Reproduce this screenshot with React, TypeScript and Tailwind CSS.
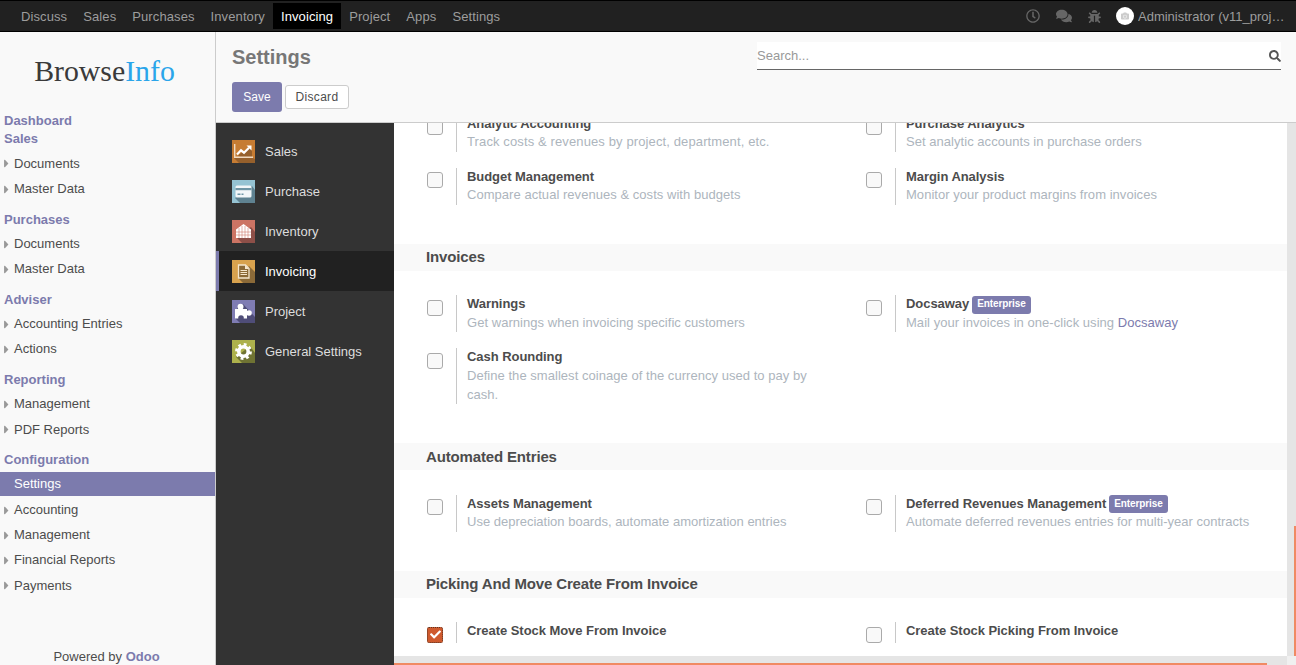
import React from 'react';
import { FaBug, FaComments, FaRegClock, FaSearch, FaCamera, FaCheck, FaCaretRight } from 'react-icons/fa';

const navItems = ['Discuss', 'Sales', 'Purchases', 'Inventory', 'Invoicing', 'Project', 'Apps', 'Settings'];

const menu = [
    { title: 'Dashboard', items: [] },
    { title: 'Sales', items: ['Documents', 'Master Data'] },
    { title: 'Purchases', items: ['Documents', 'Master Data'] },
    { title: 'Adviser', items: ['Accounting Entries', 'Actions'] },
    { title: 'Reporting', items: ['Management', 'PDF Reports'] },
    { title: 'Configuration', items: ['Settings', 'Accounting', 'Management', 'Financial Reports', 'Payments'] },
];

const AppIcon = ({ bg, shadow, d, children }: { bg: string; shadow: string; d: string; children: React.ReactNode }) => (
    <svg width="23" height="23" viewBox="0 0 23 23" className="shrink-0">
        <rect width="23" height="23" fill={bg} />
        <path d={d} fill={shadow} />
        {children}
    </svg>
);

const tabs = [
    {
        label: 'Sales',
        icon: (
            <AppIcon bg="#c67c33" shadow="#96602c" d="M2 18 L7 23 L23 23 L23 19 L21 18 Z M6 15 L9 18 L20 18 L20 11 L18 8 Z">
                <path d="M2.7 4V17.3H21" fill="none" stroke="#f0d9bf" strokeWidth="1.4" />
                <path d="M5 14.5l4-4.2 3 2.4 5-5" fill="none" stroke="#fff" strokeWidth="2.2" />
                <path d="M14.5 5.5h5v5z" fill="#fff" />
            </AppIcon>
        ),
    },
    {
        label: 'Purchase',
        icon: (
            <AppIcon bg="#95c3d3" shadow="#5f8291" d="M3 18 L8 23 L23 23 L23 10 L20 6 Z">
                <rect x="3.5" y="5.5" width="16" height="12" rx="1.5" fill="#f2f6f8" />
                <rect x="3.5" y="8" width="16" height="2.2" fill="#6f95a5" />
                <rect x="5.5" y="13.5" width="3" height="1.5" fill="#6f95a5" />
                <rect x="9.5" y="13.5" width="2" height="1.5" fill="#6f95a5" />
            </AppIcon>
        ),
    },
    {
        label: 'Inventory',
        icon: (
            <AppIcon bg="#cc7464" shadow="#8d4f48" d="M4 17 L10 23 L23 23 L23 12 L19 7 Z">
                <path d="M4 9.5 11.5 4 19 9.5v8.5H4z" fill="#ffffff" />
                <path d="M7 8v10M10 6v12M13 6v12M16 8v10M4 12h15M4 15h15" stroke="#cc7464" strokeWidth="0.55" />
            </AppIcon>
        ),
    },
    {
        label: 'Invoicing',
        icon: (
            <AppIcon bg="#d8a24e" shadow="#8b6a38" d="M6 18 L11 23 L23 23 L23 12 L17 6 Z">
                <path d="M6.5 5h7l3.5 3.5v9.5h-10.5z" fill="#8b6a38" stroke="#f5e6cd" strokeWidth="1.3" />
                <path d="M13 5v4h4z" fill="#f5e6cd" />
                <path d="M8.5 10.5h6.5M8.5 12.5h6.5M8.5 14.5h6.5" stroke="#f5e6cd" strokeWidth="1" />
            </AppIcon>
        ),
    },
    {
        label: 'Project',
        icon: (
            <AppIcon bg="#7f7cb3" shadow="#4f4d78" d="M3 18 L8 23 L23 23 L23 17 L11 4 L6 5 Z">
                <rect x="3" y="9" width="12" height="9.5" fill="#fff" />
                <circle cx="8.5" cy="6.8" r="3" fill="#fff" />
                <circle cx="17" cy="13" r="2.8" fill="#fff" />
                <circle cx="9" cy="18" r="2.8" fill="#4f4d78" />
            </AppIcon>
        ),
    },
    {
        label: 'General Settings',
        icon: (
            <AppIcon bg="#adb14c" shadow="#6f7333" d="M4 17 L10 23 L23 23 L23 13 L18 6 Z">
                <circle cx="11.5" cy="11.5" r="4.7" fill="none" stroke="#fff" strokeWidth="3.6" />
                <circle cx="11.5" cy="11.5" r="7" fill="none" stroke="#fff" strokeWidth="2.8" strokeDasharray="2.75 2.75" />
            </AppIcon>
        ),
    },
];

const Setting = ({ title, desc, badge, checked, children }: { title: string; desc?: string; badge?: boolean; checked?: boolean; children?: React.ReactNode }) => (
    <div className="flex">
        <div className="w-[29px] shrink-0 pt-[4.5px]">
            {checked ? (
                <div className="w-[16px] h-[16px] rounded-[2px] bg-[#cf5a2e] flex items-center justify-center border border-dotted border-[#5c3423]">
                    <FaCheck className="text-white text-[11px]" />
                </div>
            ) : (
                <div className="w-[16px] h-[16px] rounded-[3px] bg-[#f9f9f9] border border-[#aaaaaa]" />
            )}
        </div>
        <div className="border-l border-[#c8c8c8] pl-[10px] pr-[30px]">
            <div className="font-bold text-[#4c4c4c] tracking-[-0.05px] flex items-center">
                {title}
                {badge && <span className="ml-[3px] bg-[#7c7bad] text-white text-[10px] tracking-[-0.1px] font-bold px-[5px] h-[18px] rounded-[3px] flex items-center">Enterprise</span>}
            </div>
            {desc && <div className="text-[#adb5bd] tracking-[0.04px]">{desc}</div>}
            {children}
        </div>
    </div>
);

const Band = ({ title }: { title: string }) => (
    <div className="h-[27px] bg-[#f9f9f9] pl-[32px] flex items-center text-[15px] font-bold text-[#4c4c4c] tracking-[-0.15px]">{title}</div>
);

const Grid = ({ children, className }: { children: React.ReactNode; className: string }) => (
    <div className={`grid grid-cols-[439px_439px] gap-y-[16px] pl-[33px] items-start ${className}`}>{children}</div>
);

export default function App() {
    return (
        <div className="h-[665px] w-[1296px] overflow-hidden flex flex-col text-[13px] leading-[19px] font-['Liberation_Sans',Arial,sans-serif] bg-white">
            {/* Top navbar */}
            <header className="h-[32px] shrink-0 bg-[#212121] border-y border-black flex items-center justify-between pl-[13px] pr-[11px] text-[#9d9d9d]">
                <nav className="flex tracking-[0.1px]">
                    {navItems.map((n) => (
                        <span key={n} className={`h-[26px] px-[8px] flex items-center ${n === 'Invoicing' ? 'bg-black text-white' : ''}`}>{n}</span>
                    ))}
                </nav>
                <div className="flex items-center">
                    <FaRegClock className="text-[14px] text-[#666666]" />
                    <FaComments className="text-[16px] text-[#666666] ml-[16px]" />
                    <FaBug className="text-[13px] text-[#666666] ml-[16px]" />
                    <div className="w-[18px] h-[18px] rounded-full bg-white flex items-center justify-center ml-[15px]">
                        <FaCamera className="text-[8px] text-[#cccccc]" />
                    </div>
                    <span className="ml-[4px] w-[147px] truncate">Administrator (v11_project)</span>
                </div>
            </header>

            <div className="flex-1 flex min-h-0">
                {/* Left menu */}
                <aside className="w-[216px] shrink-0 bg-[#f9f9f9] border-r border-[#cccccc] flex flex-col">
                    <div className="h-[79.4px] shrink-0 flex items-end justify-center pb-[22px] pr-[6px] font-['Liberation_Serif',serif] text-[29.8px] leading-[36px] text-[#3a3a3a]">
                        Browse<span className="text-[#2aa5ea]">Info</span>
                    </div>
                    <div className="flex-1 leading-[18.57px]">
                        {menu.map((g, i) => (
                            <div key={i} className={i > 1 ? 'mt-[8.5px]' : ''}>
                                <div className="pl-[4px] pt-[0.3px] -mb-[0.3px] font-bold text-[#7c7bad]">{g.title}</div>
                                {g.items.length > 0 && <div className="mt-[2.68px]">
                                    {g.items.map((it) => (
                                        <div key={it} className={it === 'Settings' ? 'h-[23.28px] mt-[1px] mb-[1.9px] pl-[14px] flex items-center bg-[#7c7bad] text-white' : 'h-[25.28px] pl-[14px] flex items-center relative text-[#4c4c4c]'}>
                                            {it !== 'Settings' && <FaCaretRight className="absolute left-[0px] text-[13px] text-[#999999]" />}
                                            {it}
                                        </div>
                                    ))}
                                </div>}
                            </div>
                        ))}
                    </div>
                    <div className="h-[19px] pt-[1px] text-center text-[#4c4c4c] pr-[2px]">
                        Powered by <span className="font-bold text-[#7c7bad]">Odoo</span>
                    </div>
                </aside>

                <div className="flex-1 flex flex-col min-w-0">
                    {/* Control panel */}
                    <div className="h-[91px] shrink-0 bg-[#f9f9f9] border-b border-[#cccccc] pl-[16px] pr-[15px] pt-[10px]">
                        <div className="flex justify-between h-[40px]">
                            <div className="text-[20px] font-bold text-[#777777] leading-[30px]">Settings</div>
                            <div className="w-[524px] h-[28px] bg-white border-b border-[#666666] flex items-center justify-between text-[#999999]">
                                <span>Search...</span>
                                <FaSearch className="text-[12px] text-[#555555]" />
                            </div>
                        </div>
                        <div className="flex items-center gap-[3px]">
                            <button className="w-[50px] h-[30px] bg-[#7c7bad] text-white rounded-[3px] text-[12px]">Save</button>
                            <button className="w-[64px] h-[24px] bg-white text-[#4c4c4c] border border-[#cccccc] rounded-[3px] text-[12px] tracking-[0.3px]">Discard</button>
                        </div>
                    </div>

                    <div className="flex-1 flex min-h-0">
                        {/* Settings tabs */}
                        <div className="w-[178px] shrink-0 bg-[#333333] pt-[8px]">
                            {tabs.map((t) => (
                                <div key={t.label} className={t.label === 'Invoicing' ? 'h-[40px] flex items-center gap-[10px] pl-[13px] bg-[#212121] border-l-[3px] border-[#7c7bad] text-white' : 'h-[40px] flex items-center gap-[10px] pl-[16px] text-[#dddddd]'}>
                                    {t.icon}
                                    {t.label}
                                </div>
                            ))}
                        </div>

                        {/* Settings form */}
                        <div className="flex-1 min-w-0 flex flex-col bg-[#e5e5e5]">
                            <div className="flex h-[533px] shrink-0">
                                <div className="w-[893px] shrink-0 bg-white overflow-hidden leading-[18.57px]">
                                    <Grid className="-mt-[8.44px] pb-[38.76px]">
                                        <Setting title="Analytic Accounting">
                                            <div className="text-[#adb5bd] tracking-[0.12px]">Track costs &amp; revenues by project, department, etc.</div>
                                        </Setting>
                                        <Setting title="Purchase Analytics" desc="Set analytic accounts in purchase orders" />
                                        <Setting title="Budget Management" desc="Compare actual revenues & costs with budgets" />
                                        <Setting title="Margin Analysis" desc="Monitor your product margins from invoices" />
                                    </Grid>
                                    <Band title="Invoices" />
                                    <Grid className="pt-[24.75px] pb-[39.25px]">
                                        <Setting title="Warnings" desc="Get warnings when invoicing specific customers" />
                                        <Setting title="Docsaway" badge>
                                            <div className="text-[#adb5bd] tracking-[0.04px]">Mail your invoices in one-click using <span className="text-[#7c7bad]">Docsaway</span></div>
                                        </Setting>
                                        <Setting title="Cash Rounding" desc="Define the smallest coinage of the currency used to pay by cash." />
                                    </Grid>
                                    <Band title="Automated Entries" />
                                    <Grid className="pt-[24.25px] pb-[39.47px]">
                                        <Setting title="Assets Management">
                                            <div className="text-[#adb5bd]">Use depreciation boards, automate amortization entries</div>
                                        </Setting>
                                        <Setting title="Deferred Revenues Management" badge>
                                            <div className="text-[#adb5bd]">Automate deferred revenues entries for multi-year contracts</div>
                                        </Setting>
                                    </Grid>
                                    <Band title="Picking And Move Create From Invoice" />
                                    <Grid className="pt-[23.8px]">
                                        <Setting title="Create Stock Move From Invoice" checked />
                                        <Setting title="Create Stock Picking From Invoice" />
                                    </Grid>
                                </div>
                                {/* Vertical scrollbar */}
                                <div className="flex-1 flex justify-end items-end">
                                    <div className="w-[2px] h-[130px] bg-[#f08a63]" />
                                </div>
                            </div>
                            {/* Horizontal scrollbar */}
                            <div className="flex-1 flex">
                                <div className="w-[893px] flex items-end">
                                    <div className="w-[873px] h-[2px] bg-[#f08a63]" />
                                </div>
                                <div className="flex-1 bg-[#f0f0f0]" />
                            </div>
                        </div>
                    </div>
                </div>
            </div>
        </div>
    );
}
